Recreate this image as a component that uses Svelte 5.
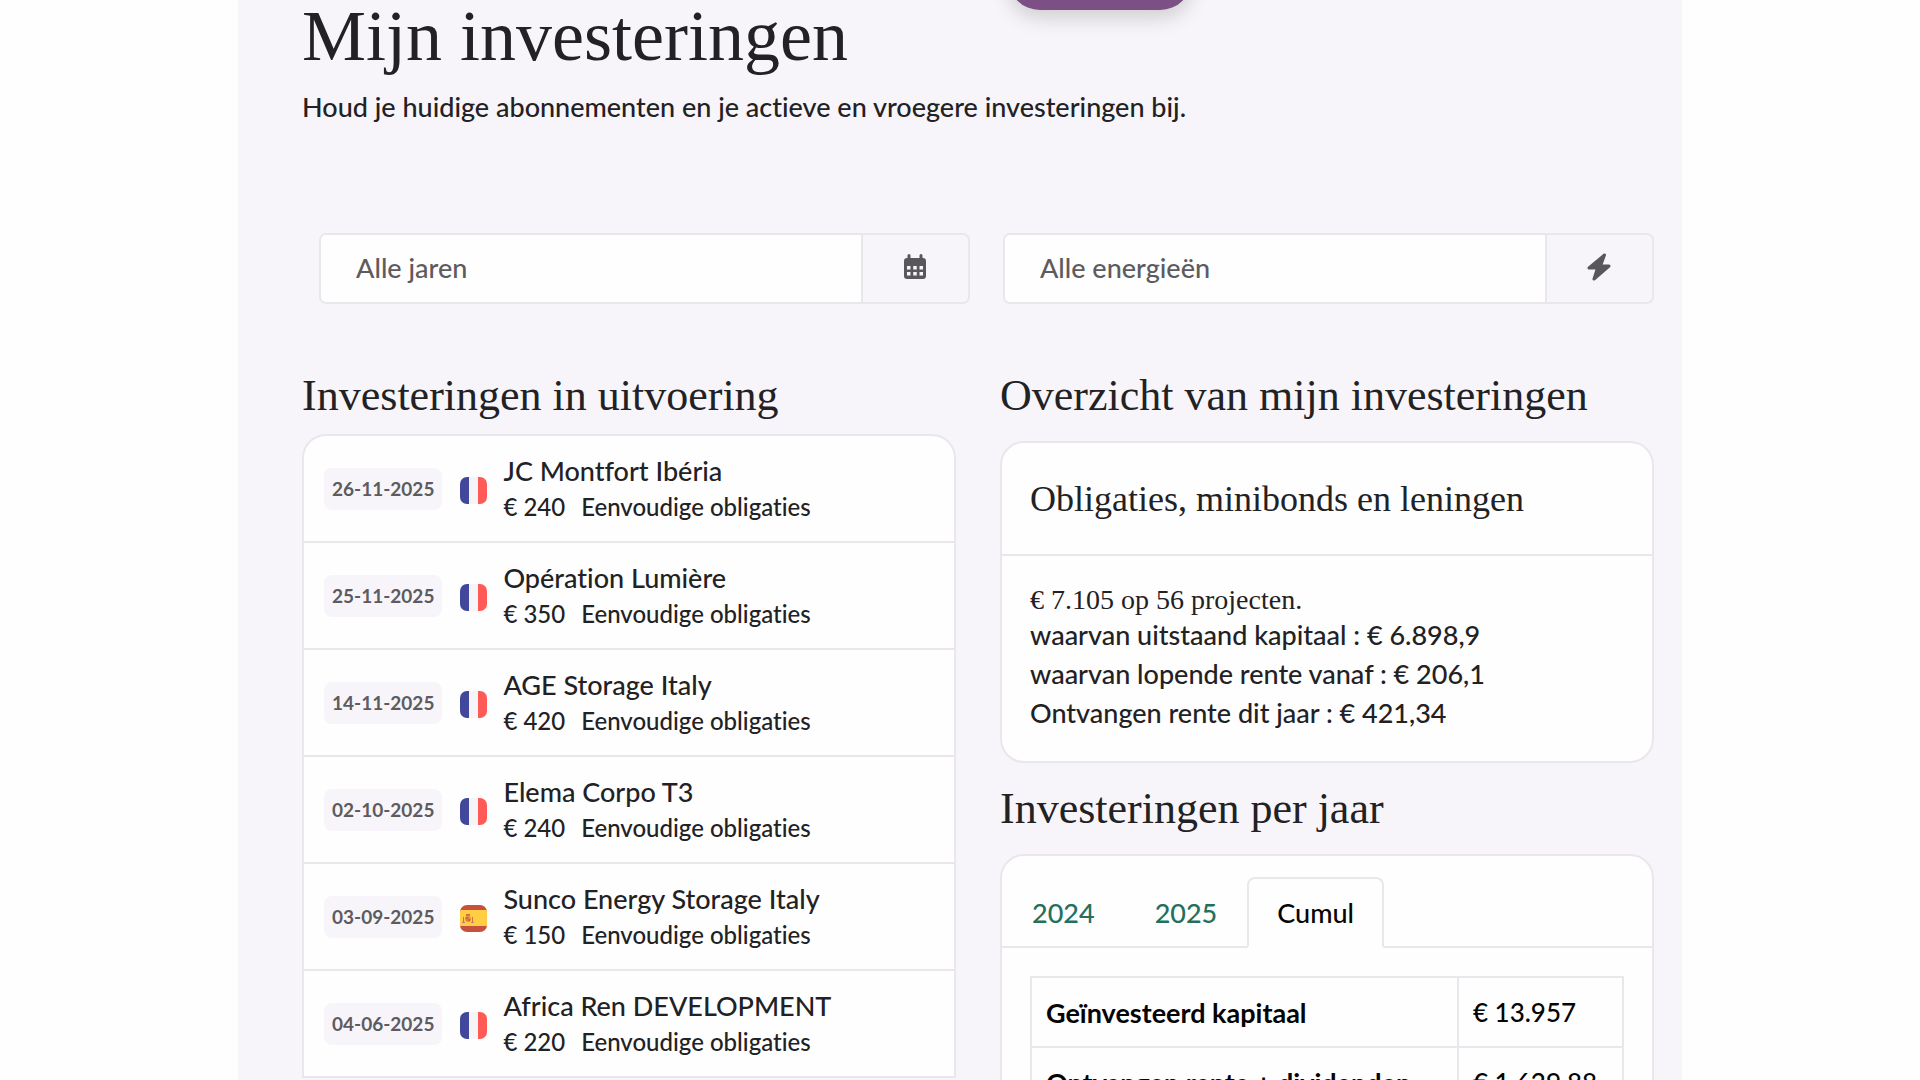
<script>
  const investments = [
    { date: '26-11-2025', flag: 'fr', name: 'JC Montfort Ibéria', amount: '€ 240' },
    { date: '25-11-2025', flag: 'fr', name: 'Opération Lumière', amount: '€ 350' },
    { date: '14-11-2025', flag: 'fr', name: 'AGE Storage Italy', amount: '€ 420' },
    { date: '02-10-2025', flag: 'fr', name: 'Elema Corpo T3', amount: '€ 240' },
    { date: '03-09-2025', flag: 'es', name: 'Sunco Energy Storage Italy', amount: '€ 150' },
    { date: '04-06-2025', flag: 'fr', name: 'Africa Ren DEVELOPMENT', amount: '€ 220' },
  ];
  const tabs = ['2024', '2025', 'Cumul'];
  let active = $state('Cumul');
</script>

<main class="page">
  <button class="floating" type="button" aria-label="Menu"></button>

  <header>
    <h1>Mijn investeringen</h1>
    <p class="intro">Houd je huidige abonnementen en je actieve en vroegere investeringen bij.</p>
  </header>

  <form class="filters">
    <div class="filter">
      <select aria-label="Jaar">
        <option>Alle jaren</option>
      </select>
      <span class="addon">
        <svg width="24" height="26" viewBox="0 0 24 26" aria-hidden="true">
          <path fill="#59575c" fill-rule="evenodd" d="M6 0a1.500 1.500 0 0 1 1.500 1.500V4h9V1.500a1.500 1.500 0 0 1 3 0V4H20a3 3 0 0 1 3 3v15a3 3 0 0 1-3 3H4a3 3 0 0 1-3-3V7a3 3 0 0 1 3-3h.5V1.500A1.500 1.500 0 0 1 6 0ZM4 12v3.500h3.500V12Zm6.250 0v3.500h3.500V12Zm6.250 0v3.500H20V12ZM4 18v3.500h3.500V18Zm6.250 0v3.500h3.500V18Zm6.250 0v3.500H20V18Z" />
        </svg>
      </span>
    </div>
    <div class="filter">
      <select aria-label="Energie">
        <option>Alle energieën</option>
      </select>
      <span class="addon">
        <svg width="24" height="28" viewBox="0 0 24 28" aria-hidden="true">
          <path fill="#59575c" stroke="#59575c" stroke-width="3" stroke-linejoin="round" d="M17.500 2 2 15h8.500L7 26 22 13h-8.500Z" />
        </svg>
      </span>
    </div>
  </form>

  <div class="columns">
    <section>
      <h2>Investeringen in uitvoering</h2>
      <ul class="card list">
        {#each investments as item}
          <li>
            <time>{item.date}</time>
            {#if item.flag === 'fr'}
              <svg class="flag" viewBox="0 0 27 27" role="img" aria-label="Frankrijk">
                <path fill="#41479b" d="M0 0h9v27H0z" />
                <path fill="#f5f5f8" d="M9 0h9v27H9z" />
                <path fill="#ff5a55" d="M18 0h9v27h-9z" />
              </svg>
            {:else}
              <svg class="flag" viewBox="0 0 27 27" role="img" aria-label="Spanje">
                <path fill="#c8503f" d="M0 0h27v27H0z" />
                <path fill="#ffce42" d="M0 5h27v16H0z" />
                <circle cx="8" cy="14" r="3" fill="#e58b45" />
                <path fill="#c8503f" opacity=".75" d="M6 9h4v2H6zM3 12h1v5H3zM12 12h1v5h-1zM6 12h2v2H6zM8 14h2v2H8z" />
                <path fill="#a98a76" d="M2 17h3v1H2zM11 17h3v1h-3z" />
              </svg>
            {/if}
            <div class="details">
              <strong>{item.name}</strong>
              <p><span>{item.amount}</span><span>Eenvoudige obligaties</span></p>
            </div>
          </li>
        {/each}
      </ul>
    </section>

    <section class="right">
      <h2>Overzicht van mijn investeringen</h2>
      <article class="card overview">
        <h3>Obligaties, minibonds en leningen</h3>
        <div class="body">
          <h4>€ 7.105 op 56 projecten.</h4>
          <p>waarvan uitstaand kapitaal : € 6.898,9</p>
          <p>waarvan lopende rente vanaf : € 206,1</p>
          <p>Ontvangen rente dit jaar : € 421,34</p>
        </div>
      </article>

      <h2>Investeringen per jaar</h2>
      <div class="card">
        <div class="tabs" role="tablist">
          {#each tabs as tab}
            <button
              type="button"
              role="tab"
              aria-selected={active === tab}
              class:active={active === tab}
              onclick={() => (active = tab)}>{tab}</button>
          {/each}
        </div>
        <div class="panel" role="tabpanel">
          <table>
            <tbody>
              <tr><th scope="row">Geïnvesteerd kapitaal</th><td>€ 13.957</td></tr>
              <tr><th scope="row">Ontvangen rente + dividenden</th><td>€ 1.629,88</td></tr>
            </tbody>
          </table>
        </div>
      </div>
    </section>
  </div>
</main>

<style>
  :global(body) {
    background: #fefefe;
  }
  :global(*) {
    box-sizing: border-box;
  }
  h1, h2, h3, h4, p, ul {
    margin: 0;
    padding: 0;
    font-weight: 400;
  }
  .page {
    position: relative;
    width: 75.2%;
    height: 100vh;
    overflow: hidden;
    margin: 0 auto;
    padding: 0 28px 0 64px;
    background: #f7f5f9;
    color: #222124;
    font: 500 27px/39px Lato, sans-serif;
    font-variant-ligatures: none;
  }
  p, select, button, td, strong {
    font-weight: 500;
  }
  .floating {
    position: absolute;
    top: -54px;
    left: 770px;
    width: 184px;
    height: 64px;
    border: 0;
    border-radius: 32px;
    background: #7c5084;
    box-shadow: 0 8px 20px rgb(0 0 0 / 16%);
  }
  h1, h2, h3, h4 {
    font-family: "Liberation Serif", serif;
  }
  h1 {
    font-size: 72px;
    line-height: 72px;
  }
  h2 {
    font-size: 44px;
    line-height: 52px;
  }
  .intro {
    margin-top: 15px;
  }
  .filters {
    display: grid;
    grid-template-columns: 1fr 1fr;
    gap: 33px;
    margin: 107px 0 66px 17px;
  }
  .filter {
    display: flex;
    height: 71px;
    border: 2px solid #e9e7eb;
    border-radius: 7px;
    overflow: hidden;
  }
  select {
    flex: 1;
    min-width: 0;
    padding: 0 35px 2px;
    border: 0;
    appearance: none;
    background: #fefefe;
    color: #5d5b60;
    font: inherit;
  }
  .addon {
    display: grid;
    place-items: center;
    width: 107px;
    padding-bottom: 4px;
    border-left: 2px solid #e9e7eb;
  }
  .columns {
    display: grid;
    grid-template-columns: 1fr 1fr;
    gap: 44px;
  }
  .card {
    border: 2px solid #e9e7eb;
    border-radius: 24px;
    background: #fefefe;
  }
  .list {
    margin-top: 12px;
    border-bottom: 0;
    border-radius: 24px 24px 0 0;
    list-style: none;
  }
  li {
    display: flex;
    align-items: center;
    height: 107px;
    padding: 0 20px;
    border-bottom: 2px solid #e9e7eb;
  }
  time {
    padding: 0 8px;
    border-radius: 8px;
    background: #f7f5f9;
    color: #5d5b60;
    font-size: 19px;
    line-height: 42px;
    font-weight: 700;
  }
  .flag {
    width: 27px;
    height: 27px;
    margin: 3px 16px 0 18px;
    border-radius: 7px;
  }
  .details strong {
    display: block;
    line-height: 36px;
  }
  .details p {
    display: flex;
    gap: 16px;
    font-size: 24px;
    line-height: 36px;
  }
  .right h2 {
    margin-bottom: 19px;
  }
  .overview {
    margin-bottom: 20px;
  }
  h3 {
    padding: 32px 28px 31px;
    border-bottom: 2px solid #e9e7eb;
    font-size: 36px;
    line-height: 48px;
  }
  .body {
    padding: 28px 28px 29px;
  }
  h4 {
    font-size: 28px;
    line-height: 31px;
  }
  .tabs {
    display: flex;
    padding: 21px 0 0;
    border-bottom: 2px solid #e9e7eb;
  }
  .tabs button {
    margin-bottom: -2px;
    padding: 14px 28px;
    border: 2px solid transparent;
    border-radius: 8px 8px 0 0;
    background: none;
    color: #25705c;
    font: inherit;
  }
  .tabs .active {
    border-color: #e9e7eb #e9e7eb #fefefe;
    background: #fefefe;
    color: #050505;
  }
  .panel {
    padding: 28px;
  }
  table {
    width: 100%;
    border-collapse: collapse;
    color: #050505;
  }
  th, td {
    height: 70px;
    padding: 0 14px;
    border: 2px solid #e9e7eb;
    text-align: left;
  }
  th {
    font-weight: 700;
  }
  td {
    width: 165px;
    font-size: 26px;
    white-space: nowrap;
  }
</style>
